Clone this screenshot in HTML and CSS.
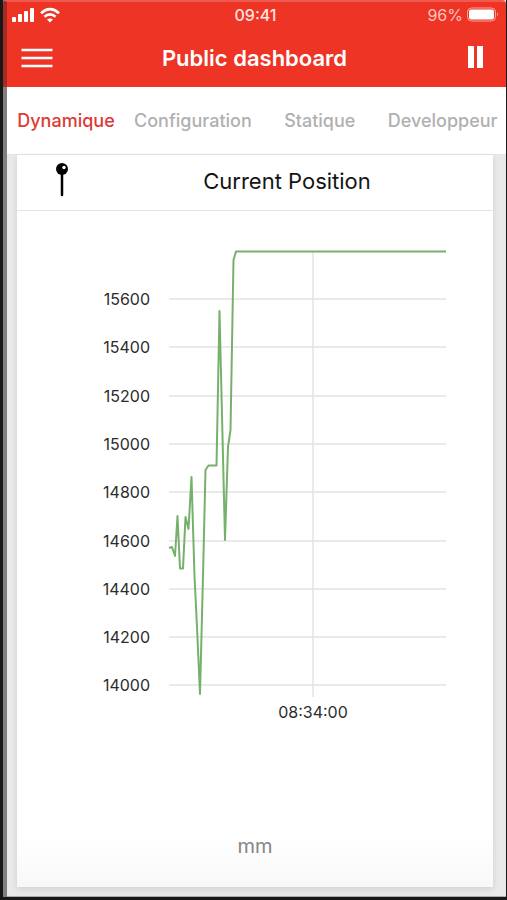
FILE: index.html
```html
<!DOCTYPE html>
<html lang="fr">
<head>
<meta charset="utf-8">
<meta name="viewport" content="width=device-width, initial-scale=1">
<title>Public dashboard</title>
<link rel="stylesheet" href="styles.css">
</head>
<body>
<div class="screen">
  <header class="top">
    <div class="status">
      <div class="signals">
        <svg width="24" height="16" viewBox="0 0 24 16" fill="#fff" aria-hidden="true">
          <rect x="0" y="10" width="4" height="5" rx="1"/><rect x="6" y="7" width="4" height="8" rx="1"/><rect x="12" y="4" width="4" height="11" rx="1"/><rect x="18" y="1" width="4" height="14" rx="1"/>
        </svg>
        <svg width="22" height="16" viewBox="0 0 22 16" fill="none" stroke="#fff" stroke-width="2.6" aria-hidden="true">
          <path d="M1 6.200Q10-1.800 19 6.200M4.400 9.700Q10 4.900 15.600 9.700"/><path d="M7 12.600Q10 10.200 13 12.600L10 15.600Z" fill="#fff" stroke="none"/>
        </svg>
      </div>
      <span class="clock">09:41</span>
      <div class="power">
        <span>96%</span>
        <svg width="32" height="16" viewBox="0 0 32 16" aria-hidden="true">
          <rect x="0.500" y="1" width="28" height="13" rx="4" fill="none" stroke="#f8a49c" stroke-width="1"/><rect x="2" y="2.500" width="25" height="10" rx="2" fill="#fff"/><path d="M30 5.500Q32 7.500 30 9.500Z" fill="#f8a49c"/>
        </svg>
      </div>
    </div>
    <div class="bar">
      <button class="icon-button" aria-label="Menu">
        <svg width="32" height="24" viewBox="0 0 32 24" stroke="#fff" stroke-width="2.400" aria-hidden="true"><path d="M.5 4H31.500M.5 12H31.500M.5 20H31.500"/></svg>
      </button>
      <h1>Public dashboard</h1>
      <button class="icon-button" aria-label="Pause">
        <svg width="20" height="24" viewBox="0 0 20 24" fill="#fff" aria-hidden="true"><rect x="0" y="0" width="6" height="22"/><rect x="9" y="0" width="6" height="22"/></svg>
      </button>
    </div>
  </header>
  <nav class="tabs">
    <a class="tab active" href="#dynamique">Dynamique</a>
    <a class="tab" href="#configuration">Configuration</a>
    <a class="tab" href="#statique">Statique</a>
    <a class="tab" href="#developpeur">Developpeur</a>
  </nav>
  <main class="content">
    <section class="card">
      <div class="card-head">
        <svg class="pin" width="14" height="36" viewBox="0 0 14 36" aria-hidden="true"><path d="M7 10V32" stroke="#000" stroke-width="2.500" stroke-linecap="round"/><circle cx="7" cy="6" r="6"/><circle cx="9" cy="4.500" r="1.700" fill="#fff"/></svg>
        <h2>Current Position</h2>
      </div>
      <svg class="chart" viewBox="0 0 476 520" role="img" aria-label="Current Position">
        <g class="grid">
          <path d="M152 88H429M152 136H429M152 185H429M152 233H429M152 281H429M152 330H429M152 378H429M152 426H429M152 474H429M296 40V486"/>
        </g>
        <g class="axis-y">
          <text x="133" y="94">15600</text><text x="133" y="142">15400</text><text x="133" y="191">15200</text><text x="133" y="239">15000</text><text x="133" y="287">14800</text><text x="133" y="336">14600</text><text x="133" y="384">14400</text><text x="133" y="432">14200</text><text x="133" y="480">14000</text>
        </g>
        <text class="axis-x" x="296" y="507">08:34:00</text>
        <path class="series" d="M152 337L155 336L158 345L160.500 305L163 357.500H166L168.500 306L171.500 318L174.500 266L177.500 365L180 416L183 483L186 365L188.500 259L191.500 254.500H199.500L202.500 100L208 329L211 236L213.500 219L216.500 49L219 40.500H429"/>
      </svg>
      <p class="unit">mm</p>
    </section>
  </main>
</div>
</body>
</html>
```
FILE: styles.css
```css
* {
  box-sizing: border-box;
}

body {
  margin: 0;
  min-height: 100vh;
  display: flex;
  padding: 0 1px 3px 3px;
  background: #181818;
  font-family: Inter, "Liberation Sans", sans-serif;
}

.screen {
  flex: 1;
  min-width: 0;
  display: flex;
  flex-direction: column;
  border-left: 4px solid #808082;
  background: #e9e9ea;
}

.top {
  margin-left: -4px;
  height: 87px;
  background: #ee3425;
  color: #fff;
  border-top: 2px solid #f0594d;
  border-left: 4px solid #a52b22;
  border-top-left-radius: 4px;
  border-top-right-radius: 4px;
}

.status {
  display: grid;
  grid-template-columns: 1fr auto 1fr;
  align-items: center;
  height: 26px;
  padding: 0 7px 0 5px;
  font-size: 16px;
}

.signals,
.power {
  display: flex;
  align-items: center;
  gap: 4px;
}

.power {
  justify-content: flex-end;
  color: #fbc3bd;
}

.clock {
  font-weight: 500;
  color: #fde4e1;
}

.bar {
  display: grid;
  grid-template-columns: 1fr auto 1fr;
  align-items: center;
  height: 60px;
  padding: 0 18px 0 14px;
}

.icon-button {
  display: flex;
  padding: 0;
  border: 0;
  background: none;
}

.icon-button:last-child {
  justify-self: end;
}

h1,
h2,
.unit {
  margin: 0;
}

h1 {
  font-size: 22px;
  font-weight: 600;
}

.tabs {
  display: flex;
  height: 68px;
  overflow: hidden;
  background: #fff;
  border-bottom: 1px solid #e4e4e5;
}

.tab {
  display: flex;
  flex: none;
  align-items: center;
  justify-content: center;
  min-width: 118px;
  padding: 0 9px;
  color: #b0b0b1;
  font-size: 18px;
  font-weight: 500;
  text-decoration: none;
}

.tab.active {
  color: #dc3a34;
}

.content {
  flex: 1;
  display: flex;
  padding: 0 13px 9px 10px;
  border-bottom: 1px solid #aaa;
}

.card {
  flex: 1;
  min-width: 0;
  display: flex;
  flex-direction: column;
  background: linear-gradient(#fff 93%, #f8f8f8);
  box-shadow: 0 2px 6px #0000001c;
}

.card-head {
  display: grid;
  grid-template-columns: 90px 1fr 26px;
  align-items: center;
  height: 56px;
  border-bottom: 1px solid #e5e5e6;
}

.pin {
  justify-self: center;
  margin-bottom: 4px;
}

h2 {
  font-size: 22px;
  font-weight: 400;
  color: #141414;
  text-align: center;
  padding-bottom: 4px;
}

.chart {
  display: block;
  width: 100%;
}

.grid {
  fill: none;
  stroke: #e4e4e5;
  stroke-width: 1.5;
}

.axis-y,
.axis-x {
  font-size: 16px;
  fill: #2c2c2c;
}

.axis-y {
  text-anchor: end;
}

.axis-x {
  text-anchor: middle;
}

.series {
  fill: none;
  stroke: #76b16b;
  stroke-width: 2;
  stroke-linejoin: round;
}

.unit {
  margin-top: auto;
  padding-bottom: 28px;
  font-size: 20px;
  line-height: 26px;
  color: #858585;
  text-align: center;
}
```
